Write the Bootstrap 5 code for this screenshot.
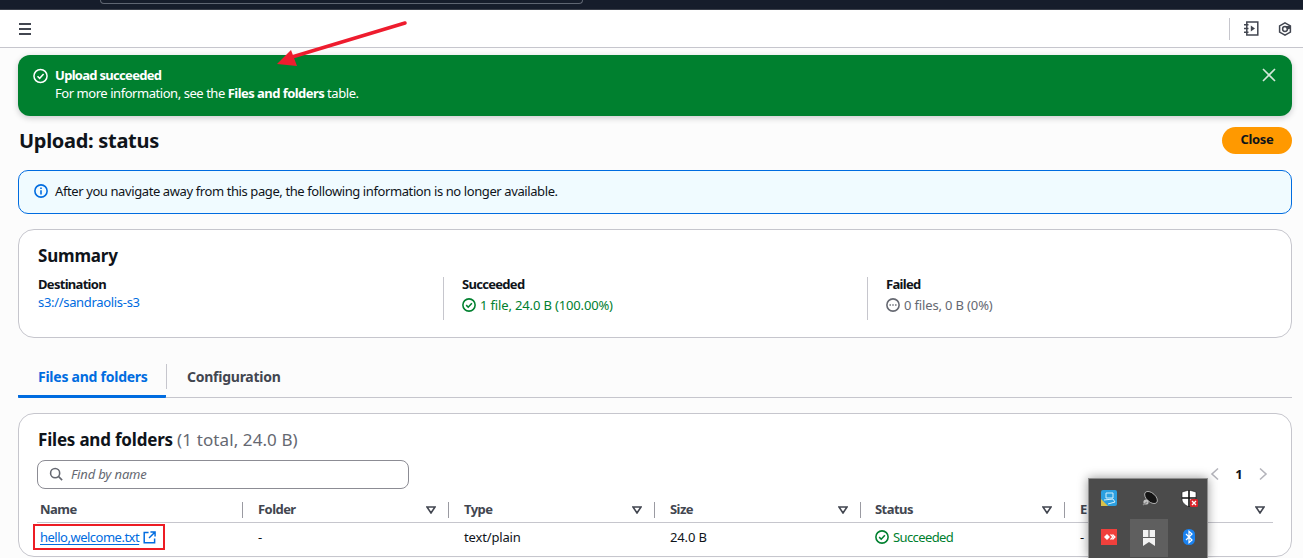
<!doctype html>
<html lang="en">

<head>
  <meta charset="utf-8">
  <meta name="viewport" content="width=device-width, initial-scale=1">
  <title>Upload: status</title>
  <link href="https://cdn.jsdelivr.net/npm/bootstrap@5.3.5/dist/css/bootstrap.min.css" rel="stylesheet">
  <style>
    html, body {
      height: 558px;
      overflow: hidden;
    }

    body {
      background-color: #fcfcfc;
      color: #0f141a;
      font-family: "Noto Sans", "Liberation Sans", sans-serif;
      font-size: 13px;
      line-height: 18px;
      letter-spacing: -0.15px;
    }

    svg {
      display: block;
      flex: none;
    }

    .label-b {
      font-weight: 700;
      letter-spacing: -0.7px;
    }

    .browser-strip {
      height: 10px;
      background-color: #161d2b;
      border-bottom: 1px solid #3a3f4a;
    }

    .browser-url {
      width: 483px;
      height: 4px;
      margin-left: 100px;
      border: 1px solid #5f6672;
      border-top: 0;
      border-radius: 0 0 6px 6px;
    }

    .top-bar {
      height: 38px;
      background-color: #fff;
      border-bottom: 1px solid #c6c6cd;
      padding: 0 11px 0 18px;
    }

    .top-sep {
      width: 1px;
      height: 22px;
      background-color: #c6c6cd;
      margin-right: 14px;
    }

    .top-icon-a {
      margin-right: 19px;
    }

    .page-body {
      padding: 7px 11px 0 18px;
    }

    .flash-ok {
      height: 61px;
      background-color: #00802f;
      color: #fff;
      border-radius: 12px;
      padding: 11px 16px 11px 15px;
      letter-spacing: -0.45px;
      box-shadow: 0 2px 6px rgba(0, 7, 22, .2);
    }

    .flash-ok b {
      letter-spacing: -0.55px;
    }

    .flash-icon {
      margin: 2px 7px 0 0;
    }

    .flash-x {
      margin: 2px 0 0 auto;
    }

    .title-row {
      height: 54px;
      padding-top: 11px;
    }

    .page-title {
      font-size: 20px;
      line-height: 28px;
      font-weight: 700;
      margin: 0 0 0 1px;
      letter-spacing: -0.3px;
    }

    .btn-close-aws {
      width: 70px;
      height: 27px;
      padding: 0 0 2px;
      border: 0;
      border-radius: 14px;
      background-color: #ff9900;
      color: #0f141a;
      font-size: 13px;
      font-weight: 700;
      letter-spacing: -0.3px;
      line-height: 25px;
    }

    .info-box {
      height: 44px;
      background-color: #f0fbff;
      border: 1px solid #006ce0;
      border-radius: 10px;
      padding: 0 15px 2px;
      gap: 7px;
      letter-spacing: -0.4px;
    }

    .panel-box {
      background-color: #fff;
      border: 1px solid #c6c6cd;
      border-radius: 16px;
    }

    .summary-box {
      height: 109px;
      margin-top: 15px;
      padding: 14px 19px 0;
    }

    .panel-title {
      font-size: 17px;
      line-height: 24px;
      font-weight: 700;
      margin: 0;
      letter-spacing: -0.2px;
    }

    .panel-title span {
      font-weight: 400;
      color: #656871;
      letter-spacing: 0.1px;
    }

    .summary-cols {
      margin-top: 9px;
      display: grid;
      grid-template-columns: 405px 424px 1fr;
    }

    .summary-cell {
      height: 43px;
    }

    .summary-cell > div:first-child {
      margin-top: -2px;
    }

    .summary-cell + .summary-cell {
      border-left: 1px solid #c6c6cd;
      padding-left: 18px;
    }

    .summary-value {
      margin-top: 3px;
    }

    .text-ok {
      color: #00802f;
    }

    .text-muted-aws {
      color: #656871;
    }

    .link-aws {
      color: #006ce0;
      text-decoration: none;
      letter-spacing: -0.32px;
    }

    .tab-row {
      height: 60px;
      padding-top: 26px;
      border-bottom: 1px solid #c6c6cd;
      font-size: 14px;
      letter-spacing: -0.25px;
    }

    .tab-on {
      width: 148px;
      height: 34px;
      padding: 4px 0 0 20px;
      font-weight: 700;
      color: #006ce0;
      border-bottom: 3px solid #006ce0;
      border-radius: 0 0 1px 1px;
    }

    .tab-off {
      height: 25px;
      padding: 4px 0 0 20px;
      border-left: 1px solid #c6c6cd;
      font-weight: 700;
      color: #424650;
    }

    .files-box {
      height: 144px;
      margin-top: 15px;
      padding: 14px 19px 0 18px;
    }

    .files-box .panel-title {
      margin-left: 1px;
    }

    .search-row {
      margin-top: 7px;
      height: 30px;
    }

    .search-box {
      width: 372px;
      height: 29px;
      border: 1px solid #8c8c94;
      border-radius: 8px;
      padding: 0 11px;
      color: #656871;
      font-style: italic;
    }

    .pager-box {
      margin-right: 4px;
    }

    .pager-now {
      font-weight: 700;
      width: 38px;
      text-align: center;
    }

    .file-table {
      width: 1236px;
      table-layout: fixed;
      margin: 9px 0 0;
      --bs-table-bg: transparent;
    }

    .file-table th,
    .file-table td {
      padding: 0;
      border-bottom: 1px solid #c6c6cd;
      font-size: 13px;
      color: #0f141a;
    }

    .file-table th {
      height: 24px;
      padding-top: 4px;
      vertical-align: top;
      font-weight: 700;
      letter-spacing: -0.55px;
      color: #424650;
    }

    .file-table td {
      height: 30px;
      vertical-align: middle;
      border-bottom: 0;
    }

    .w-name { width: 206px; }
    .w-col { width: 206px; }
    .w-status { width: 204px; }

    .head-cell {
      height: 16px;
      padding: 0 0 2px 15px;
      border-right: 1px solid #9a9aa2;
    }

    .head-cell.first-col {
      padding-left: 3px;
    }

    .head-cell.status-col,
    .body-cell.status-col {
      padding-left: 14px;
    }

    .last-col .head-cell {
      border-right: 0;
    }

    .filter-arrow {
      margin: 2px 12px 0 auto;
    }

    .last-col .filter-arrow {
      margin-right: 8px;
    }

    .body-cell {
      padding-left: 15px;
    }

    .body-cell.first-col {
      padding-left: 3px;
    }

    .file-link {
      position: relative;
      color: #006ce0;
      letter-spacing: -0.5px;
      text-decoration: underline;
      text-underline-offset: 2px;
    }

    .ok-name {
      letter-spacing: -0.6px;
    }

    .red-box {
      position: absolute;
      left: -7px;
      top: -4px;
      width: 132px;
      height: 26px;
      border: 2px solid #ed1c24;
    }

    .red-arrow {
      position: absolute;
      left: 270px;
      top: 15px;
    }

    .tray-menu {
      position: absolute;
      left: 1088px;
      top: 478px;
      width: 120px;
      height: 80px;
      background-color: #4b4b4b;
      border: 1px solid #8f8f8f;
      border-width: 1px 1px 0;
      box-shadow: 0 0 10px rgba(0, 0, 0, .4);
      display: grid;
      grid-template-columns: repeat(3, 40px);
      grid-template-rows: 38px 40px;
      place-items: center;
    }

    .tray-hover {
      width: 38px;
      height: 38px;
      align-self: end;
      background-color: #5f5f5f;
      display: flex;
      align-items: center;
      justify-content: center;
    }
  </style>
</head>

<body>
  <div class="browser-strip">
    <div class="browser-url"></div>
  </div>

  <div class="top-bar d-flex align-items-center">
    <svg width="14" height="12" viewBox="0 0 14 12" fill="none" stroke="#424650" stroke-width="2">
      <path d="M1 1h12M1 6h12M1 11h12" />
    </svg>
    <div class="top-sep ms-auto"></div>
    <svg class="top-icon-a" width="15" height="15" viewBox="0 0 15 15" fill="none" stroke="#424650" stroke-width="1.5">
      <path d="M2.8 1h11v13h-11zM0 3.8h4.5M0 7.5h4.5M0 11.2h4.5" />
      <path d="M6.8 4.5l4.2 3-4.2 3z" fill="#424650" stroke="none" />
    </svg>
    <svg width="14" height="14" viewBox="0 0 14 14" fill="none" stroke="#424650" stroke-width="1.5">
      <path d="M7 .9l5.4 3v6.2l-5.4 3-5.4-3v-6.2z" />
      <circle cx="7" cy="7" r="2.4" />
      <path d="M7 4.6l5-1.2v3.4l-2.6.6z" fill="#424650" stroke="none" />
    </svg>
  </div>

  <div class="page-body">
    <div class="flash-ok d-flex">
      <svg class="flash-icon" width="15" height="16" viewBox="0 0 16 16" fill="none" stroke="#fff" stroke-width="1.6">
        <circle cx="8" cy="8" r="7" />
        <path d="M4.8 8.2l2.3 2.3 4.2-4.6" />
      </svg>
      <div>
        <div class="label-b">Upload succeeded</div>
        <div>For more information, see the <b>Files and folders</b> table.</div>
      </div>
      <svg class="flash-x" width="14" height="14" viewBox="0 0 14 14" fill="none" stroke="#d5e8db" stroke-width="1.6">
        <path d="M1 1l12 12M13 1l-12 12" />
      </svg>
    </div>

    <div class="title-row d-flex justify-content-between align-items-start">
      <h1 class="page-title">Upload: status</h1>
      <button class="btn-close-aws">Close</button>
    </div>

    <div class="info-box d-flex align-items-center">
      <svg width="14" height="14" viewBox="0 0 16 16" fill="none" stroke="#006ce0" stroke-width="1.8">
        <circle cx="8" cy="8" r="7" />
        <path d="M8 7v5M8 4v1.8" />
      </svg>
      <span>After you navigate away from this page, the following information is no longer available.</span>
    </div>

    <div class="panel-box summary-box">
      <h2 class="panel-title">Summary</h2>
      <div class="summary-cols">
        <div class="summary-cell">
          <div class="label-b">Destination</div>
          <a class="link-aws" href="#">s3://sandraolis-s3</a>
        </div>
        <div class="summary-cell">
          <div class="label-b">Succeeded</div>
          <div class="summary-value d-flex align-items-center gap-1 text-ok">
            <svg width="14" height="14" viewBox="0 0 16 16" fill="none" stroke="#00802f" stroke-width="1.8">
              <circle cx="8" cy="8" r="7" />
              <path d="M4.8 8.2l2.3 2.3 4.2-4.6" />
            </svg>
            <span>1 file, 24.0 B (100.00%)</span>
          </div>
        </div>
        <div class="summary-cell">
          <div class="label-b">Failed</div>
          <div class="summary-value d-flex align-items-center gap-1 text-muted-aws">
            <svg width="14" height="14" viewBox="0 0 16 16" fill="none" stroke="#656871" stroke-width="1.8">
              <circle cx="8" cy="8" r="7" />
              <path d="M4 8h1.6M7.2 8h1.6M10.4 8h1.6" />
            </svg>
            <span>0 files, 0 B (0%)</span>
          </div>
        </div>
      </div>
    </div>

    <div class="tab-row d-flex align-items-start">
      <div class="tab-on">Files and folders</div>
      <div class="tab-off">Configuration</div>
    </div>

    <div class="panel-box files-box">
      <h2 class="panel-title">Files and folders <span>(1 total, 24.0 B)</span></h2>

      <div class="search-row d-flex align-items-center justify-content-between">
        <div class="search-box d-flex align-items-center gap-2">
          <svg width="14" height="14" viewBox="0 0 16 16" fill="none" stroke="#656871" stroke-width="1.8">
            <circle cx="7" cy="7" r="5.2" />
            <path d="M11 11l4 4" />
          </svg>
          <span>Find by name</span>
        </div>
        <div class="pager-box d-flex align-items-center">
          <svg width="10" height="14" viewBox="0 0 10 14" fill="none" stroke="#b4b4bb" stroke-width="1.6">
            <path d="M8 1.5l-6 5.5 6 5.5" />
          </svg>
          <span class="pager-now">1</span>
          <svg width="10" height="14" viewBox="0 0 10 14" fill="none" stroke="#b4b4bb" stroke-width="1.6">
            <path d="M2 1.5l6 5.5-6 5.5" />
          </svg>
        </div>
      </div>

      <table class="table file-table">
        <colgroup>
          <col class="w-name">
          <col class="w-col">
          <col class="w-col">
          <col class="w-col">
          <col class="w-status">
          <col>
        </colgroup>
        <thead>
          <tr>
            <th><div class="head-cell first-col d-flex align-items-center">Name</div></th>
            <th><div class="head-cell d-flex align-items-center">Folder
              <svg class="filter-arrow" width="10" height="8" viewBox="0 0 10 8" fill="none" stroke="#424650" stroke-width="1.6"><path d="M1 1h8l-4 6z" /></svg></div></th>
            <th><div class="head-cell d-flex align-items-center">Type
              <svg class="filter-arrow" width="10" height="8" viewBox="0 0 10 8" fill="none" stroke="#424650" stroke-width="1.6"><path d="M1 1h8l-4 6z" /></svg></div></th>
            <th><div class="head-cell d-flex align-items-center">Size
              <svg class="filter-arrow" width="10" height="8" viewBox="0 0 10 8" fill="none" stroke="#424650" stroke-width="1.6"><path d="M1 1h8l-4 6z" /></svg></div></th>
            <th><div class="head-cell status-col d-flex align-items-center">Status
              <svg class="filter-arrow" width="10" height="8" viewBox="0 0 10 8" fill="none" stroke="#424650" stroke-width="1.6"><path d="M1 1h8l-4 6z" /></svg></div></th>
            <th class="last-col"><div class="head-cell d-flex align-items-center">E
              <svg class="filter-arrow" width="10" height="8" viewBox="0 0 10 8" fill="none" stroke="#424650" stroke-width="1.6"><path d="M1 1h8l-4 6z" /></svg></div></th>
          </tr>
        </thead>
        <tbody>
          <tr>
            <td>
              <div class="body-cell first-col d-flex align-items-center gap-1">
                <a class="file-link d-inline-flex align-items-center gap-1" href="#">hello,welcome.txt
                  <svg width="13" height="13" viewBox="0 0 14 14" fill="none" stroke="#006ce0" stroke-width="1.6">
                    <path d="M6 1.5h-4.7v11.2h11.2v-4.7M8 1h5v5M13 1l-6.5 6.5" />
                  </svg>
                  <span class="red-box"></span>
                </a>
              </div>
            </td>
            <td><div class="body-cell">-</div></td>
            <td><div class="body-cell">text/plain</div></td>
            <td><div class="body-cell">24.0 B</div></td>
            <td>
              <div class="body-cell status-col d-flex align-items-center gap-1 text-ok">
                <svg width="14" height="14" viewBox="0 0 16 16" fill="none" stroke="#00802f" stroke-width="1.8">
                  <circle cx="8" cy="8" r="7" />
                  <path d="M4.8 8.2l2.3 2.3 4.2-4.6" />
                </svg>
                <span class="ok-name">Succeeded</span>
              </div>
            </td>
            <td><div class="body-cell">-</div></td>
          </tr>
        </tbody>
      </table>
    </div>
  </div>

  <svg class="red-arrow" width="145" height="55" viewBox="0 0 145 55">
    <path d="M135 8L22 42" stroke="#ee1c2e" stroke-width="3.5" stroke-linecap="round" />
    <path d="M7 49L21 35L27 51z" fill="#ee1c2e" />
  </svg>

  <div class="tray-menu">
    <svg width="16" height="16" viewBox="0 0 16 16">
      <rect width="16" height="16" rx="2" fill="#2c9fe0" />
      <path d="M0 9l7 7h-7z" fill="#d9c24a" />
      <path d="M5 3h7v5h-7zM3 10l9-1 2 3-7 2" fill="none" stroke="#d6f0fb" stroke-width="1" />
    </svg>
    <svg width="17" height="17" viewBox="0 0 17 17">
      <ellipse cx="10" cy="7.5" rx="7.6" ry="4.4" transform="rotate(42 10 7.5)" fill="#141414" stroke="#d8d8d8" stroke-width=".7" />
      <circle cx="5" cy="12" r="2.6" fill="#c4c4c4" />
      <path d="M2 15l4-3" stroke="#8c8c8c" stroke-width="1.4" />
    </svg>
    <svg width="17" height="17" viewBox="0 0 17 17">
      <path d="M8 0l7 2v7c0 4-3 6-7 8-4-2-7-4-7-8v-7z" fill="#fff" stroke="#111" stroke-width=".6" />
      <path d="M8 0v17M1 8h14" stroke="#111" stroke-width="1.6" />
      <rect x="9" y="9" width="8" height="8" rx="1.5" fill="#d8232a" />
      <path d="M11 11l4 4M15 11l-4 4" stroke="#fff" stroke-width="1.3" />
    </svg>
    <svg width="16" height="16" viewBox="0 0 16 16">
      <rect width="16" height="16" fill="#f0403c" />
      <path d="M3 8l3-3 3 3-3 3z" fill="#fff" />
      <path d="M9.5 5.5l2.5 2.5-2.5 2.5M11.5 5.5l2.5 2.5-2.5 2.5" fill="none" stroke="#fff" stroke-width="1.2" />
    </svg>
    <div class="tray-hover">
      <svg width="12" height="16" viewBox="0 0 12 16" fill="#f2f2f2">
        <path d="M0 0h5.4v7h-5.4zM6.6 0h5.4v7h-5.4zM0 8h12v8l-6-4-6 4z" />
      </svg>
    </div>
    <svg width="12" height="16" viewBox="0 0 12 16">
      <rect width="12" height="16" rx="5.5" fill="#1a82f0" />
      <path d="M3 5l6 6-3 2.6v-11.2l3 2.6-6 6" fill="none" stroke="#fff" stroke-width="1.2" />
    </svg>
  </div>

  <script src="https://cdn.jsdelivr.net/npm/bootstrap@5.3.5/dist/js/bootstrap.bundle.min.js"></script>
</body>

</html>
